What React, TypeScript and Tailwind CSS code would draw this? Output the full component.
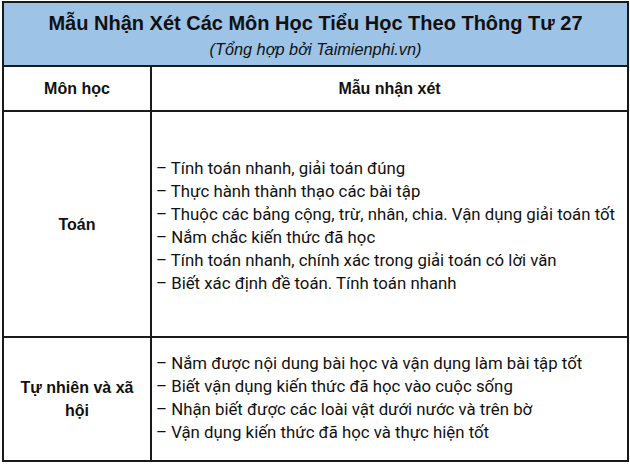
import React from 'react';

const toanItems = [
  'Tính toán nhanh, giải toán đúng',
  'Thực hành thành thạo các bài tập',
  'Thuộc các bảng cộng, trừ, nhân, chia. Vận dụng giải toán tốt',
  'Nắm chắc kiến thức đã học',
  'Tính toán nhanh, chính xác trong giải toán có lời văn',
  'Biết xác định đề toán. Tính toán nhanh',
];

const tnxhItems = [
  'Nắm được nội dung bài học và vận dụng làm bài tập tốt',
  'Biết vận dụng kiến thức đã học vào cuộc sống',
  'Nhận biết được các loài vật dưới nước và trên bờ',
  'Vận dụng kiến thức đã học và thực hiện tốt',
];

const arial = { fontFamily: '"Liberation Sans", Arial, sans-serif' };

const Row: React.FC<{ subject: string; items: string[]; height: string; offset: string }> = ({ subject, items, height, offset }) => (
  <div className={`flex border-t-2 border-[#1a1a1a] ${height}`}>
    <div className="w-[146px] shrink-0 flex items-center justify-center px-3 text-center font-bold leading-[23px]" style={arial}>
      {subject}
    </div>
    <div className={`flex-1 flex flex-col justify-center border-l-2 border-[#1a1a1a] pl-[4px] text-[16.8px] leading-[23px] ${offset}`}>
      {items.map((item, i) => (
        <div key={i}>– {item}</div>
      ))}
    </div>
  </div>
);

export default function App() {
  return (
    <div className="bg-white w-[630px] h-[464px] pt-px pl-[2px]" style={{ fontFamily: 'Roboto, "Liberation Sans", sans-serif' }}>
      <div className="w-[627px] border-2 border-[#1a1a1a] text-[16px] text-[#111]">
        {/* Title */}
        <div className="h-[62px] bg-[#9dc3e6] flex flex-col items-center pt-[7px]" style={arial}>
          <div className="text-[20px] font-bold leading-[27px]">Mẫu Nhận Xét Các Môn Học Tiểu Học Theo Thông Tư 27</div>
          <div className="text-[16.3px] italic leading-[20px] mt-[2px]">(Tổng hợp bởi Taimienphi.vn)</div>
        </div>

        {/* Header */}
        <div className="flex border-t-2 border-[#1a1a1a] h-[45px] font-bold" style={arial}>
          <div className="w-[146px] shrink-0 flex items-center justify-center">Môn học</div>
          <div className="flex-1 flex items-center justify-center border-l-2 border-[#1a1a1a]">Mẫu nhận xét</div>
        </div>

        <Row subject="Toán" items={toanItems} height="h-[226px]" offset="pt-[3px]" />
        <Row subject="Tự nhiên và xã hội" items={tnxhItems} height="h-[124px]" offset="pb-[2px]" />
      </div>
    </div>
  );
}
